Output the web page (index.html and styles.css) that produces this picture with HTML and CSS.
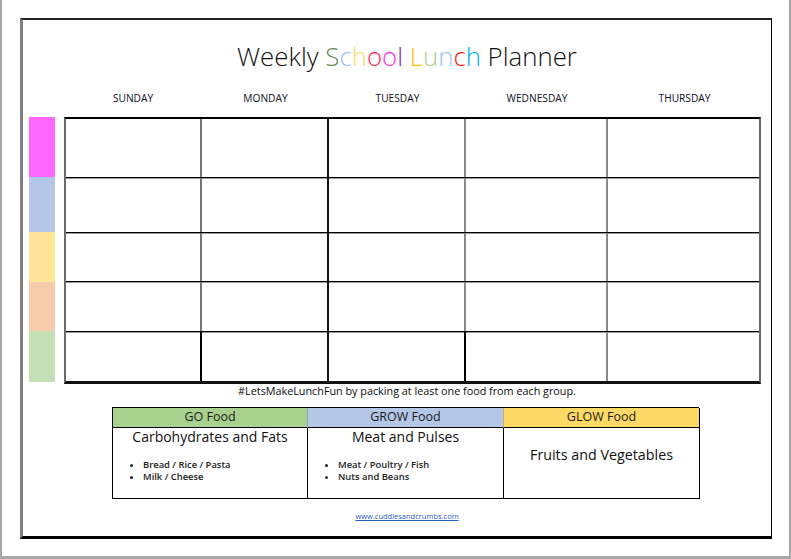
FILE: index.html
```html
<!DOCTYPE html>
<html>
<head>
<meta charset="utf-8">
<link rel="stylesheet" href="styles.css">
</head>
<body>
<div class="window">
  <div class="page">
    <h1 class="title">Weekly <span class="c1">S</span><span class="c2">c</span><span class="c3">h</span><span class="c4">o</span><span class="c5">o</span><span class="c6">l</span> <span class="c7">L</span><span class="c8">u</span><span class="c2">n</span><span class="c9">c</span><span class="c10">h</span> Planner</h1>
    <div class="days">
      <div class="day d1">SUNDAY</div>
      <div class="day d2">MONDAY</div>
      <div class="day d3">TUESDAY</div>
      <div class="day d4">WEDNESDAY</div>
      <div class="day d5">THURSDAY</div>
    </div>
    <div class="board">
      <div class="bars">
        <div class="bar pink"></div>
        <div class="bar blue"></div>
        <div class="bar yellow"></div>
        <div class="bar peach"></div>
        <div class="bar green"></div>
      </div>
      <div class="grid">
        <div class="row r1"><div class="cell k1"></div><div class="cell k2"></div><div class="cell k3"></div><div class="cell k4"></div><div class="cell k5"></div></div>
        <div class="row r2"><div class="cell k1"></div><div class="cell k2"></div><div class="cell k3"></div><div class="cell k4"></div><div class="cell k5"></div></div>
        <div class="row r3"><div class="cell k1"></div><div class="cell k2"></div><div class="cell k3"></div><div class="cell k4"></div><div class="cell k5"></div></div>
        <div class="row r4"><div class="cell k1"></div><div class="cell k2"></div><div class="cell k3"></div><div class="cell k4"></div><div class="cell k5"></div></div>
        <div class="row r5 last"><div class="cell k1"></div><div class="cell k2"></div><div class="cell k3"></div><div class="cell k4"></div><div class="cell k5"></div></div>
      </div>
    </div>
    <p class="tag">#LetsMakeLunchFun by packing at least one food from each group.</p>
    <div class="food">
      <div class="fhead go">GO Food</div>
      <div class="fhead grow">GROW Food</div>
      <div class="fhead glow">GLOW Food</div>
      <div class="fbody">
        <div class="ftitle">Carbohydrates and Fats</div>
        <ul class="flist">
          <li>Bread / Rice / Pasta</li>
          <li>Milk / Cheese</li>
        </ul>
      </div>
      <div class="fbody">
        <div class="ftitle">Meat and Pulses</div>
        <ul class="flist">
          <li>Meat / Poultry / Fish</li>
          <li>Nuts and Beans</li>
        </ul>
      </div>
      <div class="fbody mid">
        <div class="ftitle">Fruits and Vegetables</div>
      </div>
    </div>
    <div class="site"><a href="#" class="link">www.cuddlesandcrumbs.com</a></div>
  </div>
</div>
</body>
</html>
```

FILE: styles.css
```css
* { box-sizing: border-box; }
html, body { margin: 0; padding: 0; background: #fff; }
body { font-family: "Open Sans", "Liberation Sans", sans-serif; color: #111; }

.window {
  width: 791px;
  height: 559px;
  border-left: 2px solid #a6a6a6;
  border-right: 2px solid #a6a6a6;
  border-bottom: 3px solid #a6a6a6;
  padding: 18px 17px 0 18px;
}

.page {
  height: 521px;
  border-top: 2px solid #222;
  border-left: 3px solid #808080;
  border-right: 1px solid #000;
  border-bottom: 3px solid #000;
  display: flex;
  flex-direction: column;
}

.title {
  margin: 19px 0 0 0;
  padding-left: 20px;
  height: 34px;
  line-height: 34px;
  text-align: center;
  font-weight: 300;
  font-size: 25.8px;
  color: #111;
}
.c1 { color: #5f8a50; }
.c2 { color: #9dc3e6; }
.c3 { color: #ffd966; }
.c4 { color: #ff2d55; }
.c5 { color: #ff33dd; }
.c6 { color: #7a3aa8; }
.c7 { color: #ffc000; }
.c8 { color: #a9d18e; }
.c9 { color: #ff1a1a; }
.c10 { color: #00b0f0; }

.days {
  display: flex;
  margin: 18px 0 0 41px;
  height: 14px;
  line-height: 14px;
}
.day {
  text-align: center;
  font-size: 10.2px;
  color: #0e0e1e;
}
.d1 { width: 138px; }
.d2 { width: 127px; }
.d3 { width: 137px; }
.d4 { width: 142px; }
.d5 { width: 153px; }

.board {
  display: flex;
  align-items: flex-start;
  gap: 9px;
  margin: 12px 0 0 6px;
}
.bars { width: 26px; display: flex; flex-direction: column; }
.bar { width: 26px; }
.pink { height: 60px; background: #ff66ff; }
.blue { height: 55px; background: #b4c7e7; }
.yellow { height: 50px; background: #ffe699; }
.peach { height: 49px; background: #f8cbad; }
.green { height: 51px; background: #c5e0b4; }

.grid {
  width: 697px;
  border-top: 2px solid #000;
  border-left: 2px solid #6a6a6a;
  border-right: 2px solid #6a6a6a;
  border-bottom: 3px solid #111;
  display: flex;
  flex-direction: column;
}
.row {
  display: flex;
  border-bottom: 1px solid #000;
  box-shadow: 0 1px 0 #9a9a9a;
}
.r1 { height: 59px; }
.r2 { height: 55px; }
.r3 { height: 49px; }
.r4 { height: 50px; }
.r5 { height: 49px; }
.row.last { border-bottom: 0; box-shadow: none; }
.cell { height: 100%; }
.k1 { width: 136px; border-right: 2px solid #777; }
.k2 { width: 127px; border-right: 2px solid #111; }
.k3 { width: 137px; border-right: 2px solid #888; }
.k4 { width: 142px; border-right: 2px solid #888; }
.k5 { width: 151px; }
.last .k1 { border-right-color: #000; }
.last .k3 { border-right-color: #000; }

.tag {
  margin: 0;
  padding-left: 20px;
  height: 14px;
  line-height: 14px;
  text-align: center;
  font-size: 10.8px;
  color: #0a0a0a;
}

.food {
  margin: 9px 0 0 89px;
  width: 587px;
  display: grid;
  grid-template-columns: 195px 196px 196px;
  grid-template-rows: 20px 71px;
  border-top: 1px solid #000;
  border-left: 1px solid #000;
}
.fhead {
  border-bottom: 1px solid #000;
  border-right: 1px solid #000;
  text-align: center;
  font-size: 12.5px;
  line-height: 18px;
  color: #1a1a1a;
}
.go { background: #a9d18e; border-right-color: #8aa8c8; }
.grow { background: #b4c7e7; border-right-color: #c9b36a; }
.glow { background: #ffd966; }
.fbody {
  border-bottom: 1px solid #000;
  border-right: 1px solid #000;
  padding-top: 0;
}
.fbody.mid { display: flex; align-items: center; justify-content: center; padding-top: 0; padding-bottom: 16px; }
.ftitle {
  text-align: center;
  font-size: 14px;
  line-height: 18px;
  color: #111;
}
.fbody.mid .ftitle { font-size: 14.3px; }
.flist {
  margin: 13px 0 0 0;
  padding-left: 30px;
  font-size: 9.4px;
  line-height: 12px;
  font-weight: 600;
  color: #222;
}
.flist li { padding-left: 0; }

.site {
  margin-top: 12px;
  padding-left: 20px;
  text-align: center;
  font-size: 7.5px;
  line-height: 10px;
}
.link { color: #1f5fbf; text-decoration: underline; }
```
